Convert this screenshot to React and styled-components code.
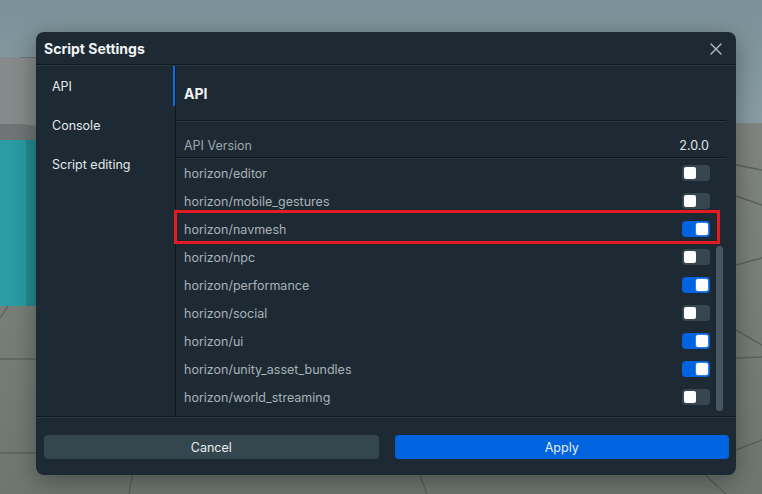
import React from 'react';
import styled, { createGlobalStyle } from 'styled-components';

const GlobalStyle = createGlobalStyle`
  html, body { margin: 0; padding: 0; }
  body {
    width: 762px;
    height: 494px;
    overflow: hidden;
    font-family: Inter, "Noto Sans", "Liberation Sans", sans-serif;
  }
`

const apis = [
  { name: 'horizon/editor', on: false },
  { name: 'horizon/mobile_gestures', on: false },
  { name: 'horizon/navmesh', on: true },
  { name: 'horizon/npc', on: false },
  { name: 'horizon/performance', on: true },
  { name: 'horizon/social', on: false },
  { name: 'horizon/ui', on: true },
  { name: 'horizon/unity_asset_bundles', on: true },
  { name: 'horizon/world_streaming', on: false },
];

const menu = ['API', 'Console', 'Script editing'];

// the 3d world behind the dialog
const Scene = () => (
  <SceneSvg width="762" height="494" viewBox="0 0 762 494">
    <defs>
      <linearGradient id="sky" x1="0" y1="0" x2="0" y2="1">
        <stop offset="0" stopColor="#7b9199" />
        <stop offset="1" stopColor="#8a9da3" />
      </linearGradient>
      <linearGradient id="floor" x1="0" y1="0" x2="0" y2="1">
        <stop offset="0" stopColor="#80867f" />
        <stop offset="1" stopColor="#6f7671" />
      </linearGradient>
    </defs>
    <rect width="762" height="130" fill="url(#sky)" />
    <rect y="123" width="762" height="371" fill="url(#floor)" />
    <rect y="57" width="40" height="68" fill="#858b8a" />
    <line x1="20" y1="57.5" x2="40" y2="57.5" stroke="#6c7574" />
    <polygon points="0,124 22,124 40,127 40,140 0,140" fill="#6e7574" />
    <rect y="140" width="40" height="166" fill="#2b9ba4" />
    <rect x="26" y="140" width="14" height="166" fill="#268a93" />
    <g stroke="#5c625e" strokeWidth="1.5" fill="none">
      <line x1="0" y1="359" x2="40" y2="359" />
      <line x1="0" y1="453" x2="40" y2="453" />
      <line x1="8" y1="306" x2="0" y2="318" />
      <line x1="133" y1="470" x2="129" y2="494" />
      <line x1="418" y1="470" x2="427" y2="494" />
      <line x1="700" y1="470" x2="726" y2="494" />
      <line x1="736" y1="165" x2="762" y2="170" />
      <line x1="736" y1="196" x2="762" y2="205" />
      <line x1="736" y1="265" x2="762" y2="258" />
      <line x1="736" y1="330" x2="762" y2="345" />
      <line x1="736" y1="358" x2="762" y2="357" />
      <line x1="736" y1="450" x2="762" y2="440" />
    </g>
  </SceneSvg>
);

const Toggle = ({ on }) => (
  <Track on={on ? 1 : 0}>
    <Knob on={on ? 1 : 0} />
  </Track>
);

const CloseIcon = () => (
  <svg width="12" height="12" viewBox="0 0 12 12">
    <path d="M1 1 L11 11 M11 1 L1 11" stroke="#b4bec3" strokeWidth="1.4" strokeLinecap="round" />
  </svg>
);

const App = () => {
  return (
    <Page>
      <GlobalStyle />
      <Scene />
      <Dialog>
        <Header>
          <Title>Script Settings</Title>
          <CloseButton><CloseIcon /></CloseButton>
        </Header>
        <Divider />
        <Body>
          <Sidebar>
            {menu.map((m, i) => (
              <MenuItem key={m} active={i === 0 ? 1 : 0}>{m}</MenuItem>
            ))}
          </Sidebar>
          <Content>
            <SectionTitle>API</SectionTitle>
            <Divider />
            <VersionRow>
              <span>API Version</span>
              <Version>2.0.0</Version>
            </VersionRow>
            <Divider />
            <List>
              {apis.map((a) => (
                <Row key={a.name}>
                  <span>{a.name}</span>
                  <Toggle on={a.on} />
                </Row>
              ))}
              <Highlight />
              <ScrollThumb />
            </List>
          </Content>
        </Body>
        <Divider />
        <Footer>
          <Button>Cancel</Button>
          <Button primary={1}>Apply</Button>
        </Footer>
      </Dialog>
    </Page>
  )
}

export default App;

const Page = styled.div`
  position: relative;
  width: 762px;
  height: 494px;
  padding: 32px 0 0 36px;
  box-sizing: border-box;
`
const SceneSvg = styled.svg`
  position: absolute;
  left: 0;
  top: 0;
  display: block;
`
const Dialog = styled.div`
  position: relative;
  display: flex;
  flex-direction: column;
  width: 700px;
  height: 443px;
  background: #1d2a33;
  border-radius: 8px;
  box-shadow: 0 6px 24px rgba(0, 0, 0, 0.35);
  overflow: hidden;
`
const Header = styled.div`
  display: flex;
  align-items: center;
  justify-content: space-between;
  height: 32px;
  padding: 0 12px 0 8px;
`
const Title = styled.h1`
  margin: 0;
  font-size: 14px;
  font-weight: 700;
  color: #f1f3f4;
`
const CloseButton = styled.div`
  display: flex;
  align-items: center;
  justify-content: center;
  width: 16px;
  height: 16px;
  margin-top: 1px;
`
const Divider = styled.div`
  flex: none;
  height: 0;
  border-top: 1px solid #0f181d;
  border-bottom: 1px solid #2a3741;
`
const Body = styled.div`
  display: flex;
  height: 350px;
`
const Sidebar = styled.div`
  display: flex;
  flex-direction: column;
  width: 139px;
  border-right: 1px solid #0f181d;
`
const MenuItem = styled.div`
  display: flex;
  align-items: center;
  height: 39px;
  padding-left: 16px;
  font-size: 12.5px;
  color: #e4e8ea;
  box-shadow: ${props => props.active ? 'inset -2px 0 0 #0d6de8' : 'none'};
  &:first-child { height: 40px; }
`
const Content = styled.div`
  display: flex;
  flex-direction: column;
  flex: 1;
  padding-right: 10px;
`
const SectionTitle = styled.h2`
  display: flex;
  align-items: center;
  height: 54px;
  margin: 0;
  padding-left: 8px;
  font-size: 14px;
  font-weight: 700;
  color: #f1f3f4;
`
const VersionRow = styled.div`
  display: flex;
  align-items: center;
  justify-content: space-between;
  height: 35px;
  padding: 11px 17px 0 8px;
  box-sizing: border-box;
  font-size: 12.5px;
  color: #9ba6ac;
`
const Version = styled.span`
  color: #e2e6e8;
`
const List = styled.div`
  position: relative;
  flex: 1;
`
const Row = styled.div`
  display: flex;
  align-items: center;
  justify-content: space-between;
  height: 28px;
  padding: 0 16px 0 8px;
  font-size: 12.5px;
  color: #a8b2b7;
`
const Track = styled.div`
  display: flex;
  align-items: center;
  justify-content: ${props => props.on ? 'flex-end' : 'flex-start'};
  width: 28px;
  height: 16px;
  padding: 2px;
  box-sizing: border-box;
  border-radius: 4px;
  background: ${props => props.on ? '#0064e0' : '#36474f'};
`
const Knob = styled.div`
  width: 12px;
  height: 12px;
  border-radius: 2px;
  background: #ffffff;
  box-shadow: ${props => props.on ? '0 0 0 1px #2f7fe6' : 'none'};
`
const Highlight = styled.div`
  position: absolute;
  left: -2px;
  top: 51px;
  width: 546px;
  height: 34px;
  border: 3px solid #e31c24;
  box-sizing: border-box;
  pointer-events: none;
`
const ScrollThumb = styled.div`
  position: absolute;
  right: 3px;
  top: 87px;
  width: 7px;
  height: 165px;
  border-radius: 4px;
  background: #465662;
`
const Footer = styled.div`
  display: flex;
  gap: 16px;
  padding: 17px 7px 0 8px;
`
const Button = styled.div`
  display: flex;
  align-items: center;
  justify-content: center;
  flex: 1;
  height: 24px;
  border-radius: 4px;
  font-size: 12.5px;
  color: #e8ecee;
  background: ${props => props.primary ? '#0064e0' : '#34474f'};
`
